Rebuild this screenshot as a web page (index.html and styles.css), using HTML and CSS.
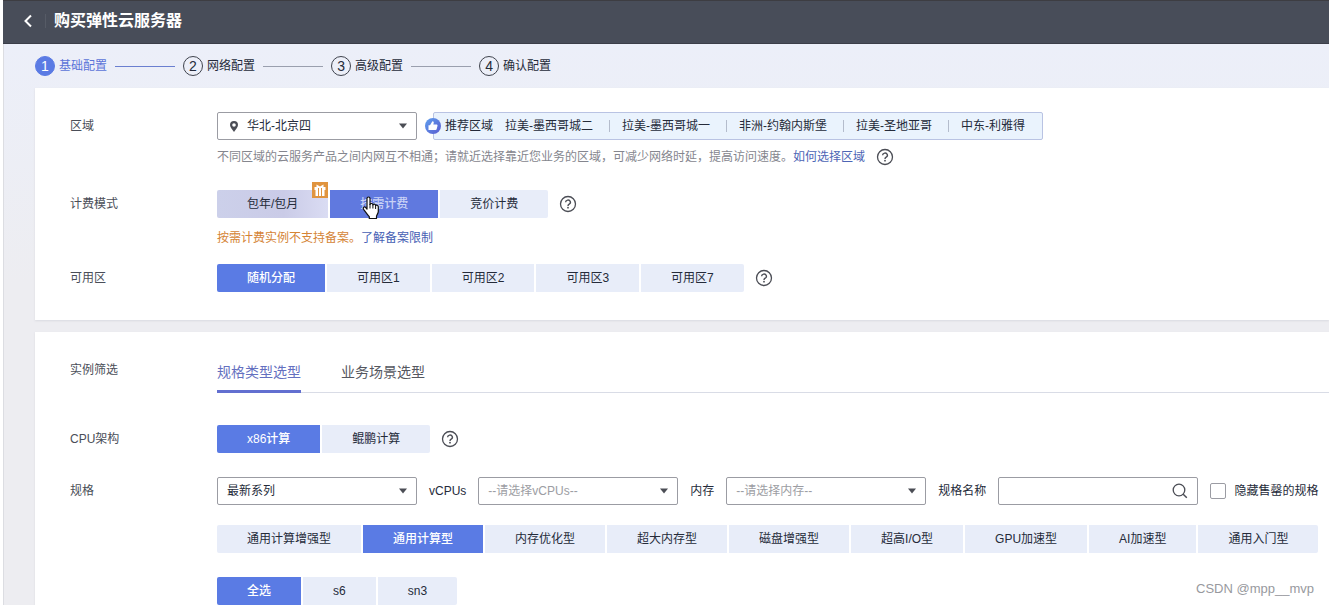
FILE: index.html
```html
<!DOCTYPE html>
<html lang="zh-CN">
<head>
<meta charset="utf-8">
<title>购买弹性云服务器</title>
<link rel="stylesheet" href="styles.css">
</head>
<body>
<svg class="defs" width="0" height="0" aria-hidden="true">
  <symbol id="help" viewBox="0 0 18 18">
    <circle cx="9" cy="9" r="7.5" fill="none" stroke="currentColor" stroke-width="1.3"/>
    <path d="M6.6 7.3a2.4 2.2 0 1 1 3.6 1.9c-.8.5-1.2.8-1.2 1.7" fill="none" stroke="currentColor" stroke-width="1.4"/>
    <circle cx="9" cy="12.7" r=".9" fill="currentColor"/>
  </symbol>
  <symbol id="caret" viewBox="0 0 8 6"><path d="M0 .5h8L4 5.5z" fill="currentColor"/></symbol>
</svg>

<header class="topbar">
  <button class="back" type="button" aria-label="返回">
    <svg width="10" height="14" viewBox="0 0 10 14"><path d="M8 1.5 2.5 7 8 12.5" fill="none" stroke="currentColor" stroke-width="2"/></svg>
  </button>
  <h1 class="title">购买弹性云服务器</h1>
</header>

<main class="page">
  <ol class="steps">
    <li class="step current"><span class="num">1</span><span>基础配置</span></li>
    <li class="step"><span class="num">2</span><span>网络配置</span></li>
    <li class="step"><span class="num">3</span><span>高级配置</span></li>
    <li class="step"><span class="num">4</span><span>确认配置</span></li>
  </ol>

  <section class="card">
    <div class="row">
      <label class="label" for="region">区域</label>
      <div class="field">
        <div class="line">
          <div class="select with-pin">
            <svg class="pin" width="8" height="11" viewBox="0 0 8 11"><path fill="currentColor" fill-rule="evenodd" d="M4 0a4 4 0 0 1 4 4c0 2.600-2.500 4.600-4 7C2.500 8.600 0 6.600 0 4a4 4 0 0 1 4-4zm0 2.200a1.800 1.800 0 1 0 0 3.600 1.800 1.800 0 0 0 0-3.600z"/></svg>
            <select id="region"><option>华北-北京四</option></select>
            <svg class="caret" width="8" height="6"><use href="#caret"/></svg>
          </div>
          <div class="recommend">
            <svg class="thumb" width="16" height="16" viewBox="0 0 16 16">
              <defs><linearGradient id="tg" x1="0" y1="0" x2="1" y2="1"><stop offset="0" stop-color="#5fa0ee"/><stop offset="1" stop-color="#5a5bd0"/></linearGradient></defs>
              <circle cx="8" cy="8" r="8" fill="url(#tg)"/>
              <path fill="#fff" d="M3.500 7.300h1.700v4.600H3.500zM5 7.200 7.400 3.300c1.200 0 1.600.8 1.300 1.800l-.4 1.500h3.200c.8 0 1.100.6 1 1.200l-.8 3.200c-.2.600-.5.900-1.100.9H5z"/>
            </svg>
            <span class="rec-title">推荐区域</span>
            <a class="rec" href="#">拉美-墨西哥城二</a>
            <a class="rec" href="#">拉美-墨西哥城一</a>
            <a class="rec" href="#">非洲-约翰内斯堡</a>
            <a class="rec" href="#">拉美-圣地亚哥</a>
            <a class="rec" href="#">中东-利雅得</a>
          </div>
        </div>
        <div class="note"><span>不同区域的云服务产品之间内网互不相通；请就近选择靠近您业务的区域，可减少网络时延，提高访问速度。<a href="#">如何选择区域</a></span><svg class="help" width="18" height="18"><use href="#help"/></svg></div>
      </div>
    </div>

    <div class="row">
      <span class="label">计费模式</span>
      <div class="field">
        <div class="line">
          <div class="group">
            <button class="opt tinted" type="button">包年/包月
              <svg class="gift" width="16" height="16" viewBox="0 0 16 16"><rect width="16" height="16" fill="#e0943f"/><path d="M2.500 5h11v3h-11zM3.500 8h9v6h-9zM4.500 2.500l3.500 2 3.500-2V5h-7z" fill="#fff"/><path d="M6.500 6v8M9.500 6v8" stroke="#e0943f"/></svg>
            </button>
            <button class="opt active hovered" type="button">按需计费
              <svg class="pointer" width="18" height="24" viewBox="0 0 18 24"><path d="M5 2.500c0-2 3-2 3 0v6c.4-1.500 2.800-1.300 2.900.4.500-1.200 2.600-.9 2.700.7.700-.9 2.700-.6 2.700 1.300v4.600c0 2-1.800 3.500-1.800 5v2H7.300v-1.800c-1.500-1.700-3.500-4.400-5.700-7.400-1.100-1.600.5-3 1.900-1.900L5 13z" fill="#fff" stroke="#111" stroke-width="1.200" stroke-linejoin="round"/><path d="M8 8v4.500M10.900 9v3.500M13.600 10v3" stroke="#111" fill="none"/></svg>
            </button>
            <button class="opt" type="button">竞价计费</button>
          </div>
          <svg class="help" width="18" height="18"><use href="#help"/></svg>
        </div>
        <div class="note warn"><span>按需计费实例不支持备案。<a href="#">了解备案限制</a></span></div>
      </div>
    </div>

    <div class="row">
      <span class="label">可用区</span>
      <div class="line">
        <div class="group">
          <button class="opt active" type="button">随机分配</button>
          <button class="opt" type="button">可用区1</button>
          <button class="opt" type="button">可用区2</button>
          <button class="opt" type="button">可用区3</button>
          <button class="opt" type="button">可用区7</button>
        </div>
        <svg class="help" width="18" height="18"><use href="#help"/></svg>
      </div>
    </div>
  </section>

  <section class="card filters">
    <div class="row">
      <span class="label">实例筛选</span>
      <nav class="tabs">
        <a class="tab selected" href="#">规格类型选型</a>
        <a class="tab" href="#">业务场景选型</a>
      </nav>
    </div>

    <div class="row arch">
      <span class="label">CPU架构</span>
      <div class="line">
        <div class="group">
          <button class="opt active" type="button">x86计算</button>
          <button class="opt" type="button">鲲鹏计算</button>
        </div>
        <svg class="help" width="18" height="18"><use href="#help"/></svg>
      </div>
    </div>

    <div class="row">
      <label class="label" for="series">规格</label>
      <div class="field spec">
        <div class="line controls">
          <div class="select"><select id="series"><option>最新系列</option></select><svg class="caret" width="8" height="6"><use href="#caret"/></svg></div>
          <label for="vcpus">vCPUs</label>
          <div class="select"><select id="vcpus" class="empty"><option>--请选择vCPUs--</option></select><svg class="caret" width="8" height="6"><use href="#caret"/></svg></div>
          <label for="memory">内存</label>
          <div class="select"><select id="memory" class="empty"><option>--请选择内存--</option></select><svg class="caret" width="8" height="6"><use href="#caret"/></svg></div>
          <label for="name">规格名称</label>
          <div class="select search"><input id="name" type="text"><svg class="lens" width="16" height="16" viewBox="0 0 16 16"><circle cx="7" cy="7" r="5.800" fill="none" stroke="currentColor" stroke-width="1.300"/><path d="m11.200 11.200 3.600 3.600" stroke="currentColor" stroke-width="1.500"/></svg></div>
          <label class="check"><input type="checkbox">隐藏售罄的规格</label>
        </div>
        <div class="group">
          <button class="opt" type="button">通用计算增强型</button>
          <button class="opt active" type="button">通用计算型</button>
          <button class="opt" type="button">内存优化型</button>
          <button class="opt" type="button">超大内存型</button>
          <button class="opt" type="button">磁盘增强型</button>
          <button class="opt" type="button">超高I/O型</button>
          <button class="opt" type="button">GPU加速型</button>
          <button class="opt" type="button">AI加速型</button>
          <button class="opt" type="button">通用入门型</button>
        </div>
        <div class="group families">
          <button class="opt active" type="button">全选</button>
          <button class="opt" type="button">s6</button>
          <button class="opt" type="button">sn3</button>
        </div>
      </div>
    </div>
  </section>
</main>
<div class="watermark">CSDN @mpp__mvp</div>
</body>
</html>
```
FILE: styles.css
```css
* { box-sizing: border-box; }
body {
  margin: 0;
  min-height: 100vh;
  display: flex;
  flex-direction: column;
  padding-left: 3px;
  background: #fff;
  color: #252b3a;
  font: 12px/18px "Liberation Sans", "Noto Sans CJK SC", sans-serif;
  overflow-x: hidden;
  position: relative;
}
button, input, select { font: inherit; color: inherit; }
a { color: #4d65b5; text-decoration: none; }
.defs { position: absolute; }

.topbar {
  display: flex;
  align-items: center;
  height: 44px;
  padding: 0 20px 2px;
  background: #484d59;
  border-top: 1px solid #3d3d42;
  border-bottom: 1px solid #3b3e49;
  color: #fff;
}
.back {
  display: flex;
  padding: 0 12px 0 0;
  border: 0;
  border-right: 1px solid #565b66;
  background: none;
  color: #fff;
}
.title { margin: 0 0 0 8px; font-size: 16px; line-height: 24px; font-weight: 700; }

.page {
  flex: 1;
  display: flex;
  flex-direction: column;
  gap: 12px;
  padding-left: 31px;
  background: linear-gradient(#eceff9, #ededf1 240px);
  border-left: 1px solid #dcdde2;
}
.steps {
  display: flex;
  margin: 0 0 -12px;
  padding: 12px 0;
  list-style: none;
}
.step { display: flex; align-items: center; gap: 4px; }
.step:not(:last-child)::after {
  content: "";
  width: 60px;
  height: 1px;
  margin: 0 8px 0 4px;
  background: #9a9fae;
}
.num {
  width: 20px;
  height: 20px;
  border: 1px solid #3f434d;
  border-radius: 50%;
  font-size: 14px;
  line-height: 18px;
  text-align: center;
}
.current { color: #5b74d8; }
.current .num { background: #5b7be4; border-color: #5b7be4; color: #fff; }
.step.current::after { background: #6b7fd0; }

.card {
  display: flex;
  flex-direction: column;
  gap: 16px;
  padding: 24px 0 28px 35px;
  background: #fff;
  box-shadow: 0 1px 2px #d9dae0;
}
.filters { flex: 1; gap: 24px; padding-bottom: 0; }
.row { display: flex; align-items: flex-start; }
.label { width: 147px; flex: none; line-height: 28px; color: #4a4e58; }
.field { display: flex; flex-direction: column; flex: 1; }
.line { display: flex; align-items: center; }
.help { color: #4b4d55; margin-left: 11px; flex: none; }

.select { position: relative; width: 200px; height: 28px; flex: none; }
.select select, .select input {
  display: block;
  width: 100%;
  height: 28px;
  padding: 0 24px 0 9px;
  border: 1px solid #9b9ca3;
  border-radius: 2px;
  background: #fff;
  appearance: none;
}
.select.with-pin select { padding-left: 29px; }
.select .empty { color: #9c9da3; }
.pin, .caret, .lens { position: absolute; color: #4b4d55; pointer-events: none; }
.pin { left: 13px; top: 9px; }
.caret { right: 10px; top: 11px; }
.lens { right: 10px; top: 6px; }

.recommend {
  position: relative;
  display: flex;
  align-items: center;
  height: 28px;
  margin-left: 16px;
  padding-left: 11px;
  background: #eaf3fd;
  border: 1px solid #b9c3e3;
  border-radius: 2px;
}
.thumb { position: absolute; left: -9px; top: 5px; }
.rec { display: flex; align-items: center; padding-left: 12px; color: #252b3a; }
.rec::after { content: ""; width: 1px; height: 12px; margin-left: 16px; background: #b4bccc; }
.rec:last-child::after { background: none; }

.note { display: flex; align-items: center; height: 34px; color: #85868e; }
.warn { color: #d58436; height: 20px; margin-top: 10px; }
.warn a { color: #4660b4; }

.group { display: flex; gap: 2px; }
.opt {
  position: relative;
  height: 28px;
  padding: 0 30px;
  border: 0;
  background: #e8edf9;
  white-space: nowrap;
  flex: none;
}
.opt:first-child { border-radius: 2px 0 0 2px; }
.opt:last-child { border-radius: 0 2px 2px 0; }
.active { background: #5a7be4; color: #fff; font-weight: 500; }
.hovered { background: #6079df; color: #c8d2f6; }
.tinted { background: linear-gradient(90deg, #ccd0ea, #cacbe7 60%, #dadcf3); }
.gift { position: absolute; right: 0; top: -8px; }
.pointer { position: absolute; left: 32px; top: 6px; }

.tabs { flex: 1; display: flex; gap: 40px; border-bottom: 1px solid #d9dce6; }
.tab {
  height: 37px;
  padding: 5px 0 6px;
  margin-bottom: -1px;
  border-bottom: 3px solid transparent;
  font-size: 14px;
  line-height: 22px;
  color: #55575f;
}
.selected { color: #6470c0; border-color: #626fd0; }
.arch { margin-top: 8px; }

.spec { gap: 20px; }
.controls { gap: 12px; }
.controls label { white-space: nowrap; }
.check { display: flex; align-items: center; gap: 8px; }
.check input {
  width: 16px;
  height: 16px;
  margin: 0;
  border: 1px solid #9b9ca3;
  border-radius: 2px;
  background: #fff;
  appearance: none;
}
.families { margin-top: 4px; }
.watermark {
  position: absolute;
  right: 15px;
  bottom: 7px;
  color: #98999e;
  font-size: 13px;
}
```
